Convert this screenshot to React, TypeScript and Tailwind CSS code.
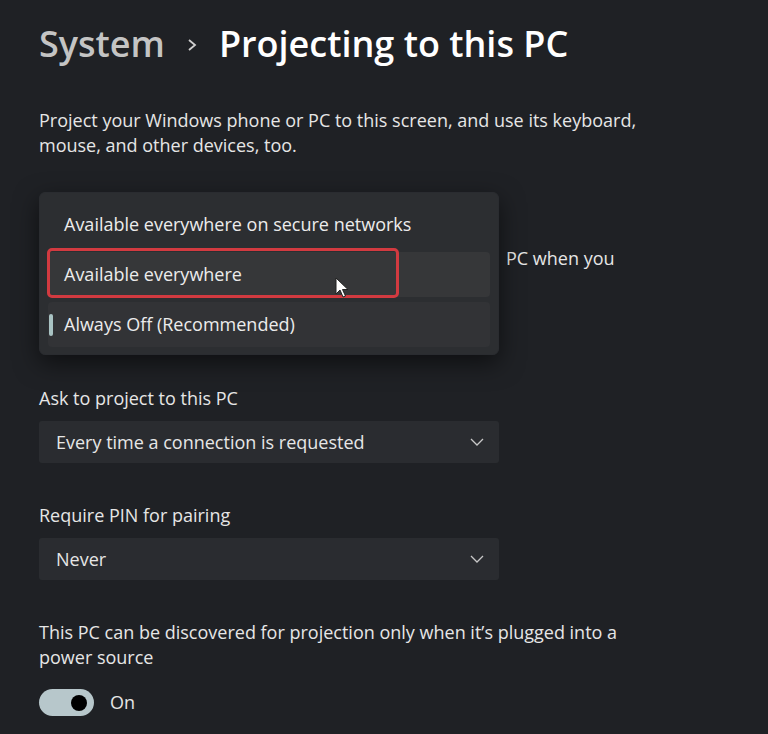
import React from "react";

const font = { fontFamily: '"Open Sans", "Noto Sans", sans-serif' };

function Chevron() {
  return (
    <svg width="14" height="8" viewBox="0 0 14 8" className="shrink-0">
      <path d="M1 1 L7 7 L13 1" fill="none" stroke="#c8c8c8" strokeWidth="1.3" />
    </svg>
  );
}

function Combo({ value }: { value: string }) {
  return (
    <div className="flex h-[42px] w-[460px] items-center justify-between rounded-[3px] bg-[#2a2c30] pl-[17px] pr-[15px] text-[18px] text-[#e6e6e6]">
      <span>{value}</span>
      <Chevron />
    </div>
  );
}

export default function App() {
  return (
    <div className="min-h-[734px] w-[768px] overflow-hidden bg-[#1f2125] text-[#e6e6e6]" style={font}>
      <div className="px-[39px] pt-[20px]">
        <div className="flex items-center text-[36px] font-semibold leading-[48px]">
          <span className="text-[#c4c4c4]">System</span>
          <svg width="12" height="14" viewBox="0 0 12 14" className="ml-[21px] mr-[21px] mt-[2px]">
            <path d="M3 2 L9 7 L3 12" fill="none" stroke="#cfcfcf" strokeWidth="1.8" />
          </svg>
          <span className="text-white">Projecting to this PC</span>
        </div>

        <p className="mt-[40px] w-[640px] text-[18px] leading-[25px] text-[#e6e6e6]">
          Project your Windows phone or PC to this screen, and use its keyboard, mouse, and other devices, too.
        </p>

        <div className="relative mt-[98px] h-[60px]">
          <p className="absolute left-[467px] top-[-10px] whitespace-nowrap text-[18px] leading-[25px]">
            PC when you
          </p>
          <div className="absolute left-0 top-[-64px] w-[460px] rounded-[6px] border border-[#2a2c30] bg-[#2c2e31] px-[8px] pb-[7px] pt-[7px] shadow-[0_8px_24px_rgba(0,0,0,0.55)]">
            <div className="flex h-[48px] items-center px-[16px] text-[18px] text-[#ececec]">
              Available everywhere on secure networks
            </div>
            <div className="relative mt-[4px] flex h-[45px] items-center rounded-[4px] bg-[#363739] px-[16px] text-[18px] text-[#ececec]">
              Available everywhere
              <div className="absolute left-[-1px] top-[-4px] h-[50px] w-[352px] rounded-[5px] border-[3px] border-[#d23a40]" />
              <svg width="16" height="22" viewBox="0 0 16 22" className="absolute left-[287px] top-[25px]">
                <path d="M1 1 L1 17 L5 13 L8 20 L10.5 19 L7.5 12.5 L13 12.5 Z" fill="#fff" stroke="#222" strokeWidth="1" />
              </svg>
            </div>
            <div className="relative mt-[5px] flex h-[45px] items-center rounded-[4px] bg-[#323336] px-[16px] text-[18px] text-[#ececec]">
              <div className="absolute left-[1px] top-[12px] h-[22px] w-[4px] rounded-full bg-[#a9c3c3]" />
              Always Off (Recommended)
            </div>
          </div>
        </div>

        <div className="mt-[70px] text-[18px] leading-[25px]">Ask to project to this PC</div>
        <div className="mt-[10px]">
          <Combo value="Every time a connection is requested" />
        </div>

        <div className="mt-[40px] text-[18px] leading-[25px]">Require PIN for pairing</div>
        <div className="mt-[10px]">
          <Combo value="Never" />
        </div>

        <p className="mt-[40px] w-[620px] text-[18px] leading-[25px]">
          This PC can be discovered for projection only when it’s plugged into a power source
        </p>
        <div className="mt-[19px] flex items-center">
          <div className="flex h-[27px] w-[55px] items-center justify-end rounded-full bg-[#b7c7cb] pr-[7px]">
            <div className="h-[16px] w-[16px] rounded-full bg-black" />
          </div>
          <span className="ml-[16px] text-[18px]">On</span>
        </div>
      </div>
    </div>
  );
}
